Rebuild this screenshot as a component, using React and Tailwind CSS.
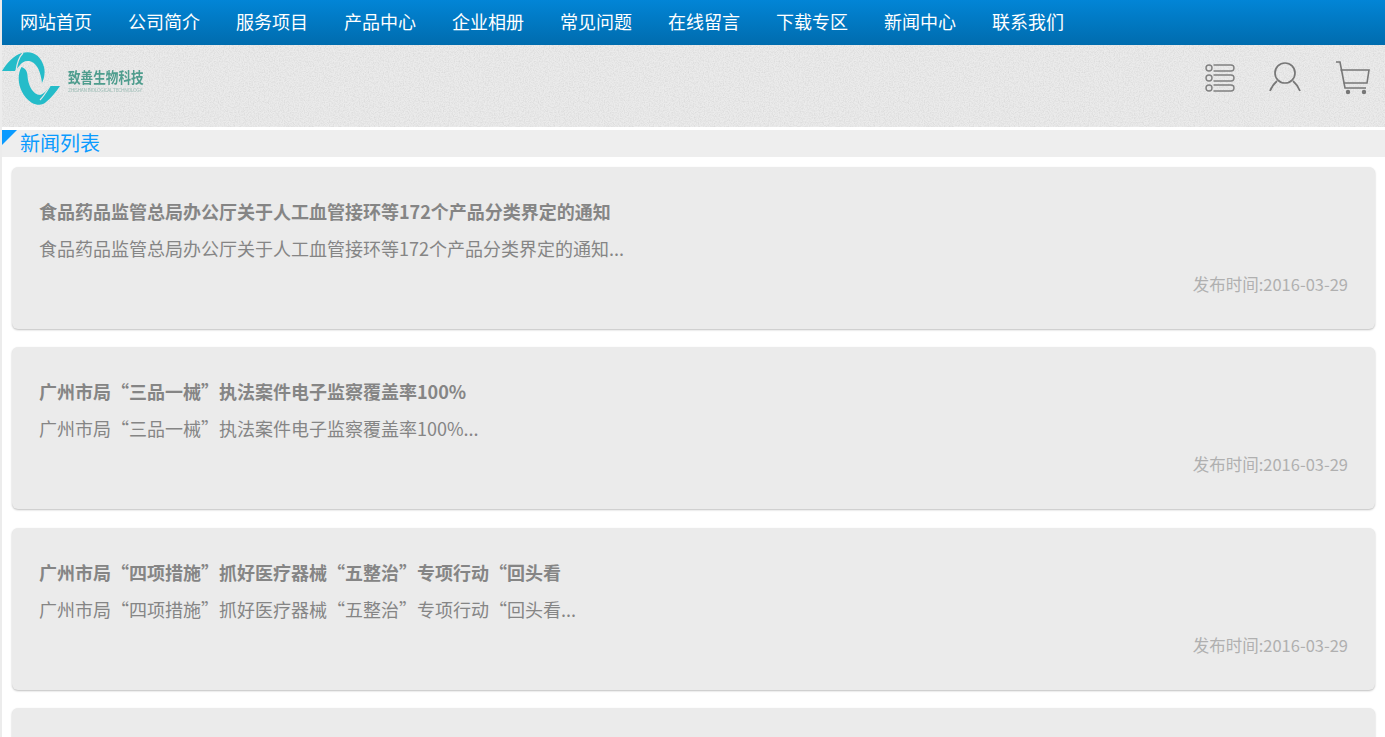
import React from "react";

const navItems = ["网站首页", "公司简介", "服务项目", "产品中心", "企业相册", "常见问题", "在线留言", "下载专区", "新闻中心", "联系我们"];

const news = [
    { title: "食品药品监管总局办公厅关于人工血管接环等172个产品分类界定的通知", desc: "食品药品监管总局办公厅关于人工血管接环等172个产品分类界定的通知..." },
    { title: "广州市局“三品一械”执法案件电子监察覆盖率100%", desc: "广州市局“三品一械”执法案件电子监察覆盖率100%..." },
    { title: "广州市局“四项措施”抓好医疗器械“五整治”专项行动“回头看", desc: "广州市局“四项措施”抓好医疗器械“五整治”专项行动“回头看..." },
    { title: "", desc: "" },
];

function Logo() {
    return (
        <div className="flex items-start">
            {/* viewBox uses page coordinates */}
            <svg width="60" height="54" viewBox="2 52 60 54" className="shrink-0 blur-[0.4px]">
                <path d="M2 71 C7 63 14 55 22 53 C32 50 41 55 44 67 C45.5 73 44 79 42 83 C41 74 38 64 31 61.5 C26 60 22 62 20 65 L15 71 Z" fill="#25bcc9" />
                <path d="M21.5 67 C16 76 18 94 32 103 C37 105.5 43 105.5 46 102 C51 98 56 92 60 86 L50 86 C47 90 44 94 40 95 C33 95 28 85 27.5 76 C27.5 71 25 68 21.5 67 Z" fill="#25bcc9" />
                <path d="M23 53 C19 57 17 63 16 71" fill="none" stroke="#e6e6e6" strokeWidth="1.2" />
                <path d="M40 100 C44 96 47 91 50 86" fill="none" stroke="#e6e6e6" strokeWidth="1.2" />
            </svg>
            <div className="ml-[6px] mt-[15px] flex flex-col w-[76px]">
                <span className="text-[12.6px] leading-[16px] font-bold whitespace-nowrap text-[#4f9d8e] scale-y-[1.2] origin-top blur-[0.3px]">致善生物科技</span>
                <span className="mt-[3px] text-[5px] leading-[7px] tracking-[-0.38px] whitespace-nowrap text-[#9dbdb6] blur-[0.2px]">ZHISHAN BIOLOGICAL TECHNOLOGY</span>
            </div>
        </div>
    );
}

function ListIcon() {
    return (
        <svg width="30" height="30" viewBox="0 0 30 30" fill="none" stroke="#808080" strokeWidth="1.4" className="mt-[3px]">
            {[4, 14, 24].map((y) => (
                <g key={y}>
                    <circle cx="4" cy={y} r="3" />
                    <path d={`M8.5 ${y - 3} H26 a3 3 0 0 1 0 6 H8.5`} />
                </g>
            ))}
        </svg>
    );
}

function UserIcon() {
    return (
        <svg width="34" height="31" viewBox="0 0 34 31" fill="none" stroke="#777" strokeWidth="1.7">
            <circle cx="17" cy="12" r="10" />
            <path d="M2 30 C3.5 26 5.5 23 9 20" />
            <path d="M32 30 C30.5 26 28.5 23 25 20" />
        </svg>
    );
}

function CartIcon() {
    return (
        <svg width="36" height="34" viewBox="0 0 36 34" fill="none" stroke="#777" strokeWidth="1.6">
            <path d="M1 1 H5 L10 27 H31" />
            <path d="M5.5 9 H34 L32 22 H8.5" />
            <circle cx="13" cy="31" r="1.4" fill="#777" />
            <circle cx="29" cy="31" r="1.4" fill="#777" />
        </svg>
    );
}

function NewsCard({ title, desc }) {
    return (
        <div className="h-[162px] shrink-0 rounded-[6px] bg-[#ebebeb] shadow-[0_1px_2px_rgba(0,0,0,0.25)] px-[27px] pt-[31px] text-[#858585]">
            {title && (
                <>
                    <h3 className="text-[18px] leading-[26px] font-bold">{title}</h3>
                    <p className="mt-[11px] text-[18px] leading-[26px]">{desc}</p>
                    <p className="mt-[10px] text-right text-[16.5px] leading-[26px] text-[#b0b0b0]">发布时间:2016-03-29</p>
                </>
            )}
        </div>
    );
}

export default function App() {
    return (
        <div className="font-['Noto_Sans_CJK_SC','Noto_Sans',sans-serif] h-[737px] overflow-hidden bg-white border-l-2 border-[#ececec]">
            {/* Nav */}
            <nav className="h-[45px] flex items-start pl-[18px] gap-[36px] bg-gradient-to-b from-[#0285d6] to-[#006cae]">
                {navItems.map((item) => (
                    <a key={item} className="text-white text-[18px] leading-[43px] whitespace-nowrap">{item}</a>
                ))}
            </nav>

            {/* Header */}
            <header className="relative h-[82px] bg-[#ebebeb] overflow-hidden">
                <svg className="absolute inset-0 w-full h-full" aria-hidden="true">
                    <filter id="grain">
                        <feTurbulence type="fractalNoise" baseFrequency="0.8" numOctaves="2" seed="4" />
                        <feColorMatrix values="0 0 0 0 0.45  0 0 0 0 0.45  0 0 0 0 0.45  0.6 0 0 0 -0.22" />
                    </filter>
                    <rect width="100%" height="100%" filter="url(#grain)" />
                </svg>
                <div className="relative flex justify-between items-start pt-[7px] pr-[14px]">
                    <Logo />
                    <div className="flex items-start gap-[33px] pt-[9px]">
                        <ListIcon />
                        <UserIcon />
                        <CartIcon />
                    </div>
                </div>
            </header>

            {/* Section title */}
            <div className="relative mt-[3px] h-[27px] bg-[#eeeeee] pl-[18px] text-[#0a9bff] text-[20px] leading-[25px]">
                <span className="absolute left-0 top-0 border-t-[15px] border-r-[15px] border-t-[#0a9bff] border-r-transparent" />
                <span className="block">新闻列表</span>
            </div>

            {/* List */}
            <div className="flex flex-col gap-[18.5px] pt-[9.8px] pl-[10px] pr-[10px]">
                {news.map((n, i) => (
                    <NewsCard key={i} {...n} />
                ))}
            </div>
        </div>
    );
}
